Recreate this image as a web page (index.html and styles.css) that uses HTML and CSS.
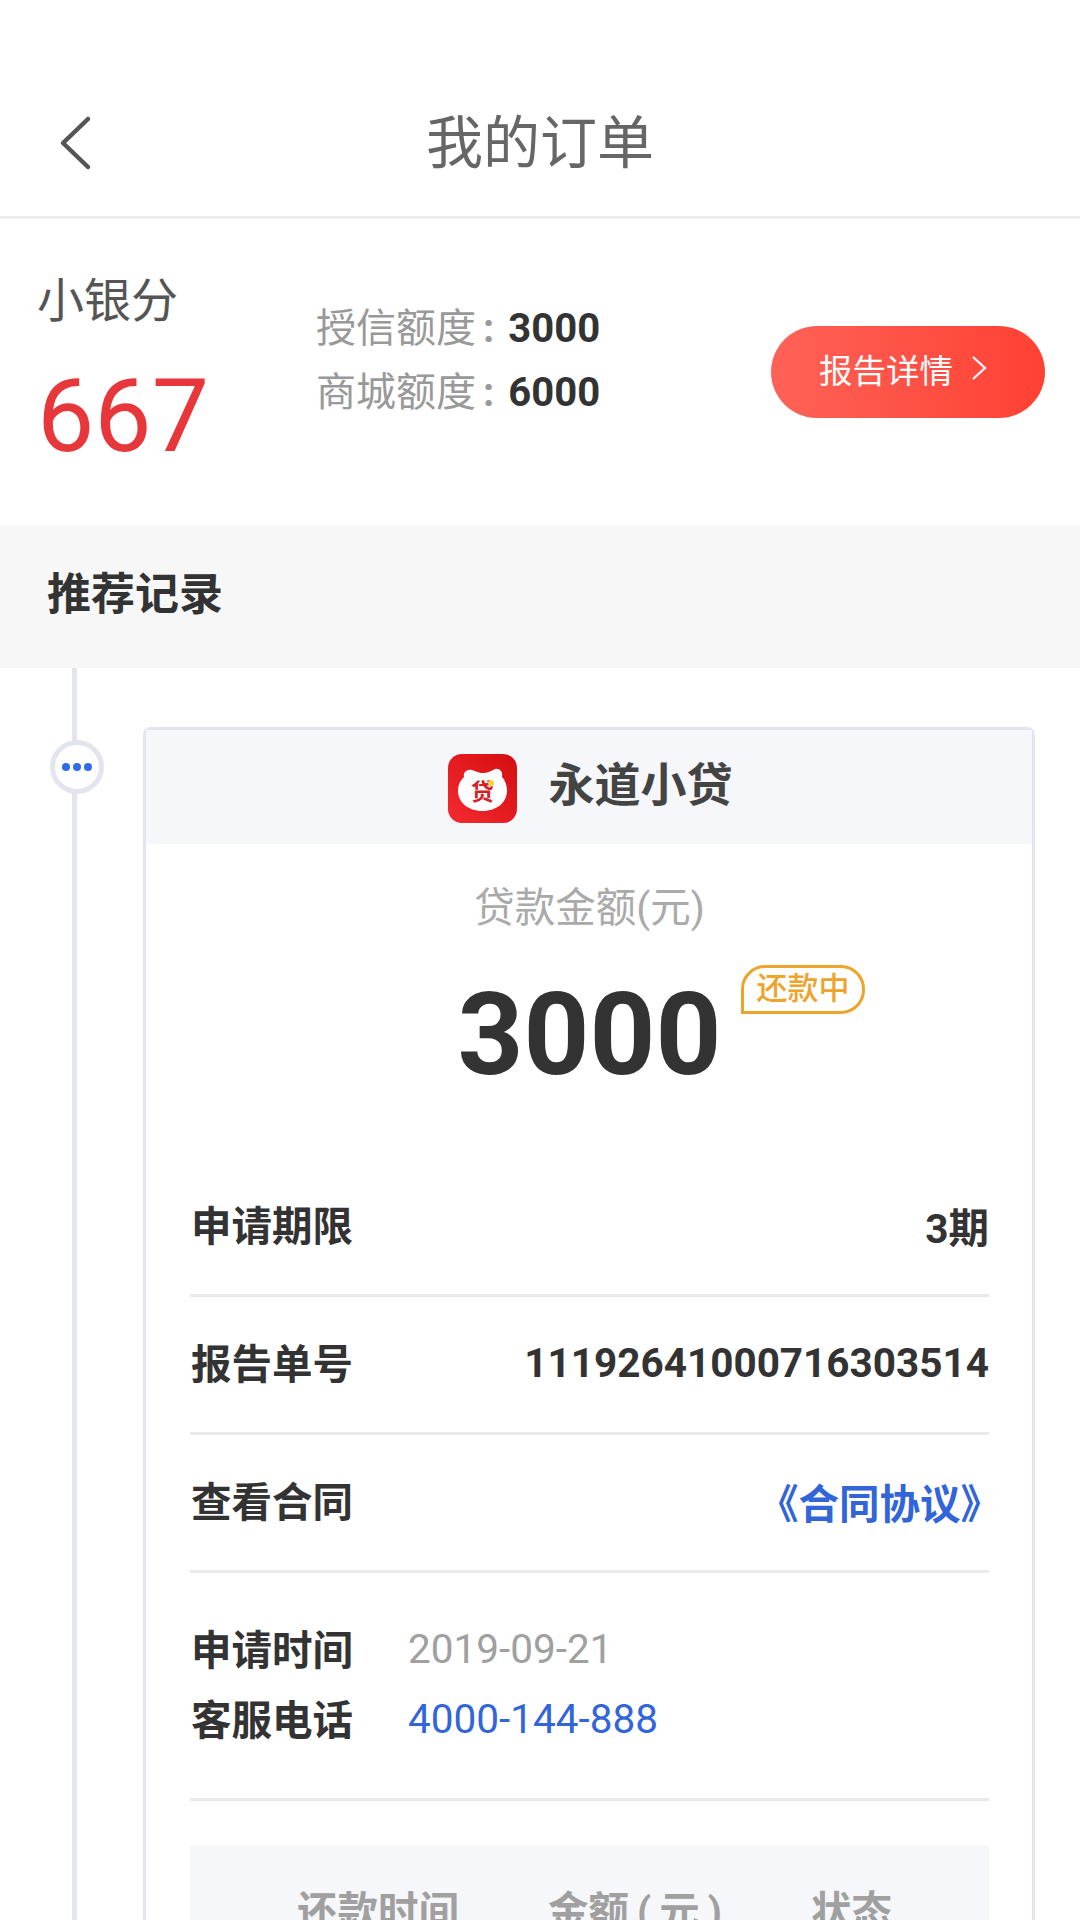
FILE: index.html
```html
<!DOCTYPE html>
<html lang="zh-CN">

<head>
    <meta charset="UTF-8">
    <meta name="viewport" content="width=device-width, initial-scale=1.0">
    <title>我的订单</title>
    <link rel="stylesheet" href="styles.css">
</head>

<body>
    <div class="page">
        <header class="navbar">
            <svg class="back" width="34" height="56" viewBox="0 0 34 56">
                <path d="M30 4 L5 28 L30 52" fill="none" stroke="#555" stroke-width="4.5" stroke-linecap="round" stroke-linejoin="round" />
            </svg>
            <h1>我的订单</h1>
        </header>

        <section class="summary">
            <div class="score">
                <div class="score-label">小银分</div>
                <div class="score-value">667</div>
            </div>
            <div class="limits">
                <div class="limit"><span>授信额度</span><span class="colon">:</span><b>3000</b></div>
                <div class="limit"><span>商城额度</span><span class="colon">:</span><b>6000</b></div>
            </div>
            <a class="report-btn">报告详情
                <svg width="16" height="26" viewBox="0 0 16 26">
                    <path d="M2 2 L14 13 L2 24" fill="none" stroke="#fff" stroke-width="2.2" />
                </svg>
            </a>
        </section>

        <div class="section-title">推荐记录</div>

        <section class="timeline">
            <div class="timeline-dot"><i></i><i></i><i></i></div>

            <div class="card">
                <div class="card-head">
                    <svg class="app-logo" width="69" height="69" viewBox="0 0 69 69">
                        <defs>
                            <linearGradient id="logoBg" x1="0" y1="1" x2="1" y2="0">
                                <stop offset="0" stop-color="#f42b30" />
                                <stop offset="1" stop-color="#d40d10" />
                            </linearGradient>
                        </defs>
                        <rect width="69" height="69" rx="14" fill="url(#logoBg)" />
                        <path d="M10 37 C10 30 13 26 16 23 C15 18 19 15 24 16 C28 17 30 19 35 19 C40 19 43 17 47 15 C52 14 55 18 54 23 C57 26 59 31 59 37 C59 48 49 57 34.5 57 C20 57 10 48 10 37 Z" fill="#fff" />
                        <text x="34.5" y="46" class="logo-char">贷</text>
                        <circle cx="43" cy="29" r="3" fill="#f8d23c" />
                    </svg>
                    <span class="app-name">永道小贷</span>
                </div>

                <div class="card-body">
                    <div class="amount-label">贷款金额(元)</div>
                    <div class="amount">
                        <span class="amount-value">3000</span>
                        <span class="status-tag">还款中</span>
                    </div>

                    <div class="row"><span class="row-label">申请期限</span><span class="row-value">3期</span></div>
                    <div class="row"><span class="row-label">报告单号</span><span class="row-value">11192641000716303514</span></div>
                    <div class="row"><span class="row-label">查看合同</span><span class="row-value link">《合同协议》</span></div>

                    <div class="info">
                        <div class="info-line"><span class="row-label">申请时间</span><span class="info-date">2019-09-21</span></div>
                        <div class="info-line"><span class="row-label">客服电话</span><span class="info-phone">4000-144-888</span></div>
                    </div>

                    <div class="repay-table">
                        <span>还款时间</span>
                        <span class="repay-amount">金额 ( 元 )</span>
                        <span>状态</span>
                    </div>
                </div>
            </div>
        </section>
    </div>
</body>

</html>
```

FILE: styles.css
```css
* {
    box-sizing: border-box;
}

body {
    margin: 0;
    padding: 0;
    background-color: #fff;
    font-family: Roboto, "Noto Sans CJK SC", sans-serif;
}

.page {
    width: 1080px;
    height: 1920px;
    overflow: hidden;
}

.navbar {
    height: 219px;
    padding-top: 60px;
    position: relative;
    display: flex;
    align-items: center;
    justify-content: center;
    border-bottom: 3px solid #eee;
}

.navbar h1 {
    margin: 0;
    font-size: 57px;
    font-weight: 400;
    color: #666;
}

.back {
    position: absolute;
    left: 58px;
    top: 115px;
}

.summary {
    height: 306px;
    padding: 0 35px 0 37px;
    display: flex;
    align-items: center;
}

.score {
    width: 279px;
    align-self: flex-start;
    padding-top: 52px;
}

.score-label {
    font-size: 47px;
    line-height: 60px;
    color: #555;
}

.score-value {
    font-size: 102px;
    line-height: 120px;
    color: #e8373a;
    margin-top: 25px;
}

.limits {
    flex: 1;
    padding-bottom: 22px;
}

.limit {
    font-size: 40px;
    line-height: 64px;
    color: #999;
    white-space: nowrap;
}

.limit b {
    color: #333;
    font-weight: 700;
}

.colon {
    margin: 0 14px 0 7px;
    font-weight: 700;
}

.report-btn {
    width: 274px;
    height: 92px;
    border-radius: 46px;
    padding: 0 10px 8px 0;
    background: linear-gradient(90deg, #ff6258, #ff4133);
    color: #fff;
    font-size: 33.5px;
    display: flex;
    align-items: center;
    justify-content: center;
    gap: 18px;
}

.section-title {
    height: 143px;
    padding: 0 0 12px 47px;
    background-color: #f7f7f7;
    display: flex;
    align-items: center;
    font-size: 44px;
    font-weight: 700;
    color: #333;
}

.timeline {
    position: relative;
    height: 1252px;
    padding: 59px 45px 0 143px;
}

.timeline::before {
    content: "";
    position: absolute;
    left: 72px;
    top: 0;
    bottom: 0;
    width: 5px;
    background-color: #e3e5ee;
}

.timeline-dot {
    position: absolute;
    left: 50px;
    top: 72px;
    width: 54px;
    height: 54px;
    border: 5px solid #e3e5ee;
    border-radius: 50%;
    background-color: #fff;
    display: flex;
    align-items: center;
    justify-content: center;
    gap: 3px;
}

.timeline-dot i {
    width: 8px;
    height: 8px;
    border-radius: 50%;
    background-color: #2f6de8;
}

.card {
    border: 3px solid #e3e5ee;
    border-bottom: 0;
    border-radius: 8px 8px 0 0;
    min-height: 1300px;
}

.card-head {
    height: 114px;
    padding-left: 2px;
    background-color: #f6f7fb;
    display: flex;
    align-items: center;
    justify-content: center;
    gap: 32px;
}

.app-logo {
    margin-top: 2px;
}

.logo-char {
    font-size: 23px;
    font-weight: 700;
    fill: #d42027;
    text-anchor: middle;
}

.app-name {
    font-size: 46px;
    font-weight: 700;
    color: #444;
    padding-bottom: 12px;
}

.card-body {
    padding: 0 43px 0 44px;
}

.amount-label {
    margin-top: 37px;
    text-align: center;
    font-size: 40.5px;
    line-height: 54px;
    color: #aaa;
}

.amount {
    position: relative;
    text-align: center;
    height: 214px;
    margin-top: 10px;
    padding-top: 12px;
}

.amount-value {
    font-size: 115px;
    line-height: 156px;
    font-weight: 700;
    color: #333;
}

.status-tag {
    position: absolute;
    left: 551px;
    top: 20px;
    width: 124px;
    height: 49px;
    border: 3px solid #eda32c;
    border-radius: 24px 24px 24px 0;
    color: #eda32c;
    font-size: 31px;
    font-weight: 500;
    line-height: 41px;
    text-align: center;
}

.row {
    height: 138px;
    padding-bottom: 3px;
    display: flex;
    align-items: center;
    justify-content: space-between;
    border-bottom: 3px solid #eaeaea;
}

.row-label {
    font-size: 40.5px;
    font-weight: 700;
    color: #333;
    padding: 0 0 4px 1px;
}

.row-value {
    font-size: 40.5px;
    font-weight: 700;
    color: #333;
}

.link {
    color: #3265d8;
    margin-right: -12px;
}

.info {
    height: 228px;
    padding-top: 41px;
    border-bottom: 3px solid #eaeaea;
}

.info-line {
    height: 70px;
    display: flex;
    align-items: center;
    gap: 55px;
}

.info-date {
    font-size: 40.5px;
    color: #a0a0a0;
}

.info-phone {
    font-size: 40.5px;
    color: #3265d8;
}

.repay-table {
    margin-top: 44px;
    height: 120px;
    background-color: #f6f7fb;
    padding: 34px 0 0 10px;
    display: flex;
    justify-content: center;
    gap: 89px;
    font-size: 40.5px;
    font-weight: 700;
    color: #a0a0a0;
}

.repay-amount {
    word-spacing: -2px;
}
```
